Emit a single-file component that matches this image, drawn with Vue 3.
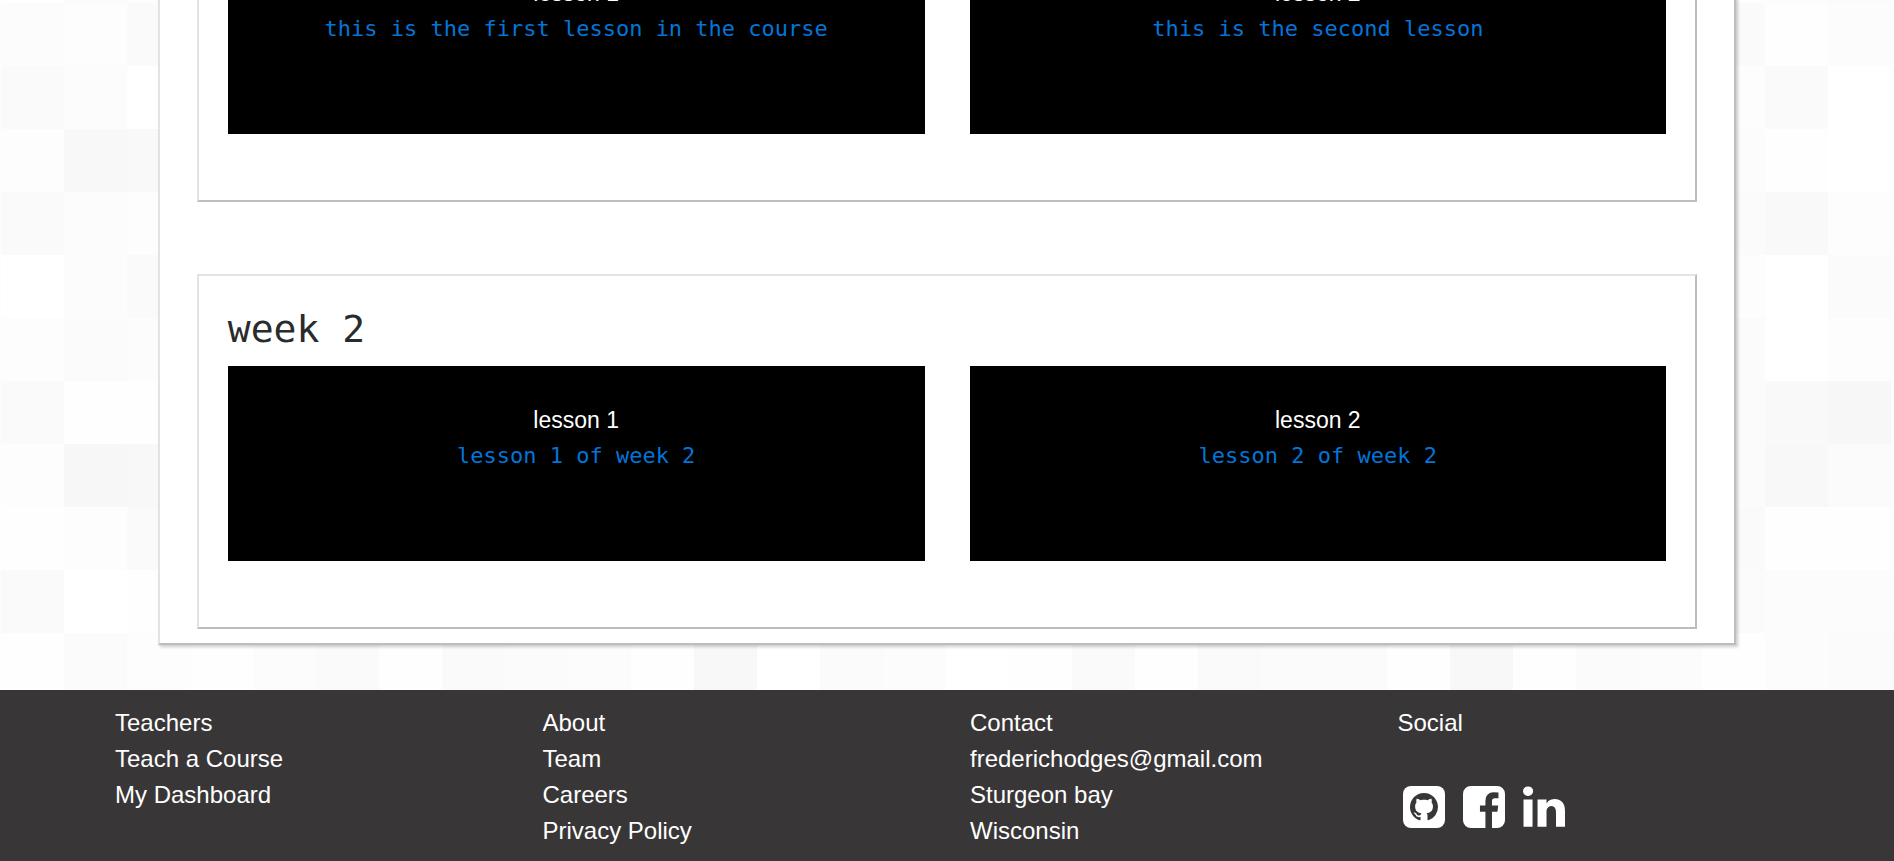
<script setup>
const weeks = [
  {
    id: 1,
    lessons: [
      { name: 'lesson 1', summary: 'this is the first lesson in the course' },
      { name: 'lesson 2', summary: 'this is the second lesson' },
    ],
  },
  {
    id: 2,
    title: 'week 2',
    lessons: [
      { name: 'lesson 1', summary: 'lesson 1 of week 2' },
      { name: 'lesson 2', summary: 'lesson 2 of week 2' },
    ],
  },
]

const columns = [
  { title: 'Teachers', items: [{ text: 'Teach a Course', href: '#teach' }, { text: 'My Dashboard', href: '#dashboard' }] },
  {
    title: 'About',
    items: [
      { text: 'Team', href: '#team' },
      { text: 'Careers', href: '#careers' },
      { text: 'Privacy Policy', href: '#privacy' },
    ],
  },
  {
    title: 'Contact',
    items: [
      { text: 'frederichodges@gmail.com', href: 'mailto:frederichodges@gmail.com' },
      { text: 'Sturgeon bay' },
      { text: 'Wisconsin' },
    ],
  },
]

// Backdrop mosaic: one grey level per 63px tile, as two hex digits.
const TILE = 63
const leftTiles = [
  'ff fb fd', 'fc fd fa', 'fa fc ff', 'fd f8 f9', 'fa fc fd', 'ff fc fa',
  'fd fb fc', 'fa fe fe', 'fd f7 f8', 'fe fd fa', 'fa ff fe',
]
const rightTiles = [
  'fe fc fb', 'fa fe fc', 'fd fa ff', 'fc fe ff', 'fb f9 fd', 'fd ff fb',
  'fb ff fd', 'fb f9 f7', 'fb f8 fb', 'fa fe fe', 'fb fc fc',
]
const bottomTiles =
  'fe fb fd fe fc fa fe fa fb fc fe f8 ff fb fc ff fe fa fe fa fb fb fe f8 fe fb fc fe fc fb fb'

const tiles = []
const addTiles = (levels, firstColumn, row) =>
  levels.split(' ').forEach((level, i) => {
    tiles.push({ x: (firstColumn + i) * TILE + 1, y: row * TILE - 60, fill: '#' + level.repeat(3) })
  })
leftTiles.forEach((levels, row) => addTiles(levels, 0, row))
rightTiles.forEach((levels, row) => addTiles(levels, 27, row))
addTiles(bottomTiles, 0, 11)
</script>

<template>
  <div class="page">
    <svg class="backdrop" aria-hidden="true">
      <rect v-for="(t, i) in tiles" :key="i" :x="t.x" :y="t.y" :width="TILE" :height="TILE" :fill="t.fill" />
    </svg>

    <main class="course">
      <section v-for="week in weeks" :key="week.id" class="week">
        <h2 v-if="week.title" class="week-title">{{ week.title }}</h2>
        <div class="lessons">
          <a v-for="lesson in week.lessons" :key="lesson.name" class="lesson" href="#lesson">
            <span class="lesson-name">{{ lesson.name }}</span>
            <span class="lesson-summary">{{ lesson.summary }}</span>
          </a>
        </div>
      </section>
    </main>

    <footer class="footer">
      <div v-for="column in columns" :key="column.title" class="column">
        <div>{{ column.title }}</div>
        <ul class="items">
          <li v-for="item in column.items" :key="item.text">
            <a v-if="item.href" :href="item.href">{{ item.text }}</a>
            <template v-else>{{ item.text }}</template>
          </li>
        </ul>
      </div>
      <div class="column">
        <div>Social</div>
        <div class="social">
          <a href="#github" aria-label="GitHub">
            <svg viewBox="0 0 42 42">
              <rect width="42" height="42" rx="8" fill="#fff" />
              <path
                transform="translate(7 7) scale(1.75)"
                fill="#393637"
                d="M8 0C3.58 0 0 3.58 0 8c0 3.54 2.29 6.53 5.47 7.59.4.07.55-.17.55-.38 0-.19-.01-.82-.01-1.49-2.01.37-2.53-.49-2.69-.94-.09-.23-.48-.94-.82-1.13-.28-.15-.68-.52-.01-.53.63-.01 1.08.58 1.23.82.72 1.21 1.87.87 2.33.66.07-.52.28-.87.51-1.07-1.78-.2-3.64-.89-3.64-3.95 0-.87.31-1.59.82-2.15-.08-.2-.36-1.02.08-2.12 0 0 .67-.21 2.2.82.64-.18 1.32-.27 2-.27s1.36.09 2 .27c1.53-1.04 2.2-.82 2.2-.82.44 1.1.16 1.92.08 2.12.51.56.82 1.27.82 2.15 0 3.07-1.87 3.75-3.65 3.95.29.25.54.73.54 1.48 0 1.07-.01 1.93-.01 2.2 0 .21.15.46.55.38A8.01 8.01 0 0 0 16 8c0-4.42-3.58-8-8-8z"
              />
            </svg>
          </a>
          <a href="#facebook" aria-label="Facebook">
            <svg viewBox="128 128 1536 1536">
              <path
                fill="#fff"
                d="M1376 128q119 0 203.500 84.500t84.500 203.500v960q0 119-84.500 203.500t-203.500 84.500h-188v-595h199l30-232h-229v-148q0-56 23.500-84t91.500-28l122-1v-207q-63-9-178-9-136 0-217.500 80t-81.500 226v171h-200v232h200v595h-532q-119 0-203.500-84.500t-84.500-203.500v-960q0-119 84.500-203.500t203.500-84.500h960z"
              />
            </svg>
          </a>
          <a href="#linkedin" aria-label="LinkedIn">
            <svg viewBox="128 128 1536 1536">
              <path
                fill="#fff"
                d="M477 625v991h-330v-991h330zm21-306q1 73-50.500 122t-135.500 49h-2q-82 0-132-49t-50-122q0-74 51.500-122.500t134.500-48.500 133 48.500 51 122.500zm1166 729v568h-329v-530q0-105-40.500-164.500t-126.500-59.500q-63 0-105.500 34.500t-63.500 85.500q-11 30-11 81v553h-329q2-399 2-647t-1-296l-1-48h329v144h-2q20-32 41-56t56.500-52 87-43.500 114.500-15.500q171 0 275 113.500t104 332.500z"
              />
            </svg>
          </a>
        </div>
      </div>
    </footer>
  </div>
</template>

<style>
body {
  background: #fdfdfd;
}
</style>

<style scoped>
/* The view rests at the end of the course: content is aligned to the bottom edge. */
.page {
  position: relative;
  display: flex;
  flex-direction: column;
  justify-content: flex-end;
  height: 100vh;
  overflow: hidden;
  font-family: "Liberation Sans", Arial, sans-serif;
  font-size: 24px;
  line-height: 36px;
}

.backdrop {
  position: absolute;
  inset: 0;
  width: 100%;
  height: 100%;
}

.course,
.footer {
  position: relative;
  flex: none;
  box-sizing: border-box;
}

.course {
  display: flex;
  flex-direction: column;
  gap: 72px;
  width: 83.333%;
  margin: 0 auto 45px;
  padding: 37px 37px 14px;
  background: #fff;
  border: 2px solid;
  border-color: #e3e3e3 #bdbdbd #bdbdbd #e3e3e3;
  box-shadow: 2px 2px 3px rgba(0, 0, 0, 0.2);
}

.week {
  padding: 30px 29px 66px;
  border: 2px solid;
  border-color: #e3e3e3 #bdbdbd #bdbdbd #e3e3e3;
}

.week-title {
  margin: 0 0 14px;
  color: #292b2c;
  font-family: "DejaVu Sans Mono", monospace;
  font-size: 38px;
  font-weight: 400;
  line-height: 46px;
}

.lessons {
  display: grid;
  grid-template-columns: 1fr 1fr;
  gap: 45px;
}

.lesson {
  display: flex;
  flex-direction: column;
  box-sizing: border-box;
  min-height: 195px;
  padding: 36px 24px;
  background: #000;
  text-align: center;
  text-decoration: none;
}

.lesson-name {
  color: #fff;
  font-size: 23px;
}

.lesson-summary {
  color: #0275d8;
  font-family: "DejaVu Sans Mono", monospace;
  font-size: 22px;
}

.footer {
  display: grid;
  grid-template-columns: repeat(4, 1fr);
  padding: 15px 92px 12px;
  background: #393637;
  color: #fff;
}

.column {
  padding: 0 23px;
}

.items {
  margin: 0;
  padding: 0;
  list-style: none;
}

.footer a {
  color: inherit;
  text-decoration: none;
}

.social {
  display: flex;
  gap: 18px;
  padding: 45px 5px 0;
}

.social svg {
  display: block;
  width: 42px;
  height: 42px;
}
</style>
